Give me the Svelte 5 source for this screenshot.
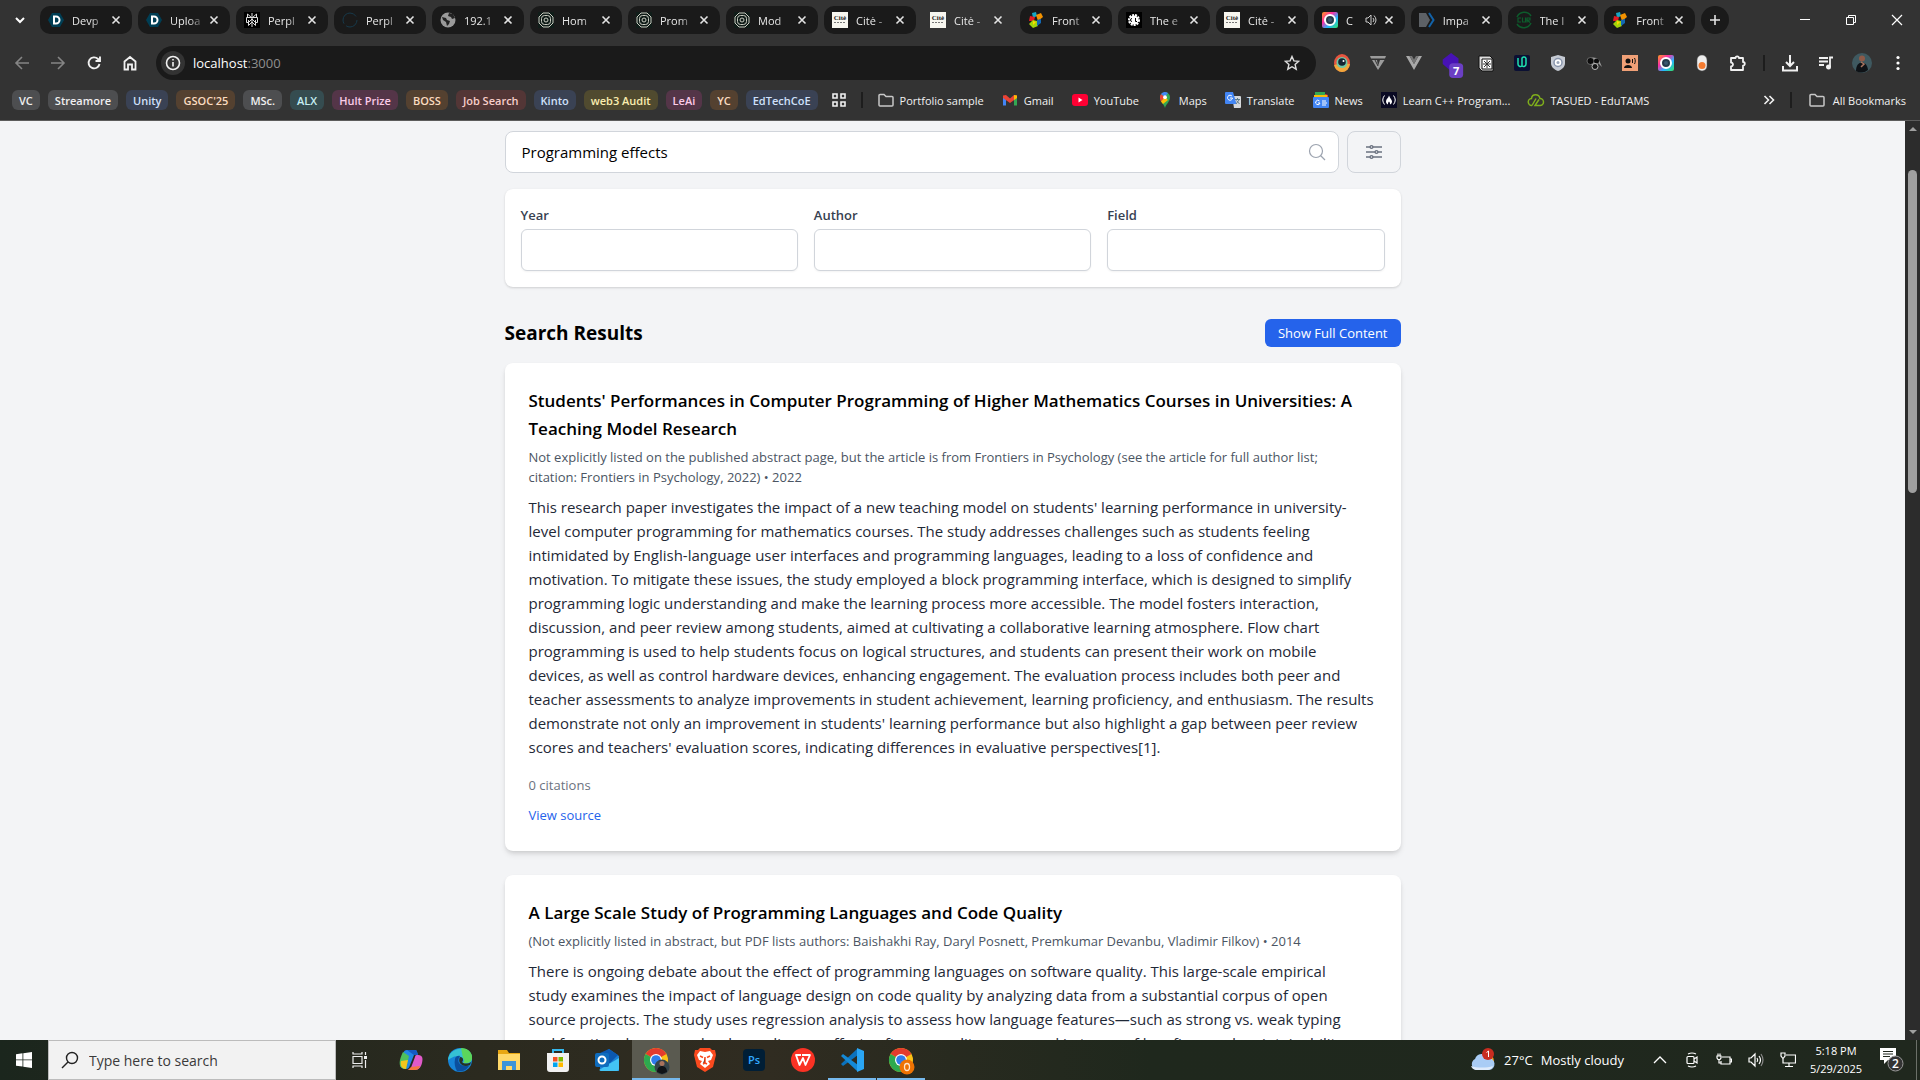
<script>
  let query = $state('Programming effects')
  let filters = $state({ year: '', author: '', field: '' })
  let showFilters = $state(true)
  let showFull = $state(false)

  const tabs = [
    { icon: 'devpost', title: 'Devp' },
    { icon: 'devpost', title: 'Uploa' },
    { icon: 'perplexity', title: 'Perpl' },
    { icon: 'loading', title: 'Perpl' },
    { icon: 'globe', title: '192.1' },
    { icon: 'rings', title: 'Hom' },
    { icon: 'rings', title: 'Prom' },
    { icon: 'rings', title: 'Mod' },
    { icon: 'cite', title: 'Citė -' },
    { icon: 'cite', title: 'Citė -', active: true },
    { icon: 'frontiers', title: 'Front' },
    { icon: 'gear', title: 'The e' },
    { icon: 'cite', title: 'Citė -' },
    { icon: 'camera', title: 'C', audio: true },
    { icon: 'impact', title: 'Impa' },
    { icon: 'cur', title: 'The I' },
    { icon: 'frontiers', title: 'Front' }
  ]

  const groups = [
    ['VC', 'grey'], ['Streamore', 'grey'], ['Unity', 'blue'], ["GSOC'25", 'orange'],
    ['MSc.', 'grey'], ['ALX', 'cyan'], ['Hult Prize', 'pink'], ['BOSS', 'orange'],
    ['Job Search', 'red'], ['Kinto', 'blue'], ['web3 Audit', 'yellow'], ['LeAi', 'pink'],
    ['YC', 'orange'], ['EdTechCoE', 'blue']
  ]

  const bookmarks = [
    ['folder', 'Portfolio sample'], ['gmail', 'Gmail'], ['youtube', 'YouTube'], ['maps', 'Maps'],
    ['translate', 'Translate'], ['news', 'News'], ['cpp', 'Learn C++ Program...'], ['cloud', 'TASUED - EduTAMS']
  ]

  const extensions = [
    'eye', 'vue2', 'vue', 'stack', 'notion', 'udacity', 'shield', 'mask', 'speaker', 'camera', 'pill', 'puzzle'
  ]

  const apps = [
    { icon: 'copilot' }, { icon: 'edge' }, { icon: 'explorer' }, { icon: 'store' }, { icon: 'outlook' },
    { icon: 'chrome', active: true, open: true }, { icon: 'brave' }, { icon: 'photoshop' }, { icon: 'wps' },
    { icon: 'vscode', open: true }, { icon: 'chrome2', open: true }
  ]

  const results = [
    {
      title: "Students' Performances in Computer Programming of Higher Mathematics Courses in Universities: A\nTeaching Model Research",
      meta: 'Not explicitly listed on the published abstract page, but the article is from Frontiers in Psychology (see the article for full author list;\ncitation: Frontiers in Psychology, 2022) • 2022',
      abstract: `This research paper investigates the impact of a new teaching model on students' learning performance in university-
level computer programming for mathematics courses. The study addresses challenges such as students feeling
intimidated by English-language user interfaces and programming languages, leading to a loss of confidence and
motivation. To mitigate these issues, the study employed a block programming interface, which is designed to simplify
programming logic understanding and make the learning process more accessible. The model fosters interaction,
discussion, and peer review among students, aimed at cultivating a collaborative learning atmosphere. Flow chart
programming is used to help students focus on logical structures, and students can present their work on mobile
devices, as well as control hardware devices, enhancing engagement. The evaluation process includes both peer and
teacher assessments to analyze improvements in student achievement, learning proficiency, and enthusiasm. The results
demonstrate not only an improvement in students' learning performance but also highlight a gap between peer review
scores and teachers' evaluation scores, indicating differences in evaluative perspectives[1].`,
      citations: 0
    },
    {
      title: 'A Large Scale Study of Programming Languages and Code Quality',
      meta: '(Not explicitly listed in abstract, but PDF lists authors: Baishakhi Ray, Daryl Posnett, Premkumar Devanbu, Vladimir Filkov) • 2014',
      abstract: `There is ongoing debate about the effect of programming languages on software quality. This large-scale empirical
study examines the impact of language design on code quality by analyzing data from a substantial corpus of open
source projects. The study uses regression analysis to assess how language features—such as strong vs. weak typing
and functional vs. procedural paradigms—affect software quality, measured in terms of bug fixes and maintainability.`,
      citations: 0
    }
  ]
</script>

{#snippet icon(name)}
  {#if name === 'devpost'}
    <svg viewBox="0 0 16 16"><path d="M4 1h8l4 7-4 7H4L0 8z" fill="#003e54" /><path d="M6 4.500h2a3.500 3.500 0 0 1 0 7H6z" fill="none" stroke="#fff" stroke-width="2" /></svg>
  {:else if name === 'perplexity'}
    <svg viewBox="0 0 16 16"><path fill="#000" d="M0 0h16v16H0z" /><path d="M8 1v14M3.500 2v3.500h9V2L8 6 3.500 2M2.500 5.500h11v5h-2L8 7l-3.500 3.500h-2zM4.500 8v5.500L8 10l3.500 3.500V8" fill="none" stroke="#ddd" /></svg>
  {:else if name === 'loading'}
    <svg viewBox="0 0 16 16"><circle cx="8" cy="8" r="7" fill="none" stroke="#17394a" stroke-dasharray="15 3 22 4" /></svg>
  {:else if name === 'globe'}
    <svg viewBox="0 0 16 16"><circle cx="8" cy="8" r="7.500" fill="#9a9a9a" /><path d="M2 5l4 1 1 2 3 1-1 3-2 2-1-4-3-2zM9 1l-1 3 3 1 1 2 3-1-2-4z" fill="#222" /></svg>
  {:else if name === 'rings'}
    <svg viewBox="0 0 16 16"><path fill="#101d19" d="M0 0h16v16H0z" /><g fill="none" stroke="#c9cbc0"><path d="M5 1h6l4 4v6l-4 4H5l-4-4V5z" /><rect x="3.500" y="3.500" width="9" height="9" rx="3" /><circle cx="8" cy="8" r="2" /></g></svg>
  {:else if name === 'cite'}
    <svg viewBox="0 0 16 16"><path fill="#f7f6ef" d="M0 0h16v16H0z" /><text x="8" y="8" text-anchor="middle" font-family="Liberation Serif, serif" font-size="7" font-weight="700" fill="#222">Citė</text><path d="M2 10.500h12" stroke="#777" stroke-dasharray="2 1" /></svg>
  {:else if name === 'frontiers'}
    <svg viewBox="0 0 16 16"><path d="M4 1l4-1 1 4-4 2z" fill="#16a6c4" /><path d="M2 4l5 1-1 4H1z" fill="#e31b23" /><path d="M8 3l5-2 2 4-5 4z" fill="#f39200" /><path d="M5 8l4 1 1 5-5 2-4-4z" fill="#a3d40b" /><path d="M9 8l4-1v4l-4 3z" fill="#1268b3" /><path d="M5 9l3 1-3 3z" fill="#ffd800" /></svg>
  {:else if name === 'gear'}
    <svg viewBox="0 0 16 16"><path fill="#000" d="M0 0h16v16H0z" /><circle cx="8" cy="8" r="4.500" fill="#fff" /><circle cx="8" cy="8" r="5" fill="none" stroke="#fff" stroke-width="2" stroke-dasharray="2 1" /><path d="M6 6.500a1.500 1.500 0 1 0 0 3M9.500 6v3.500h1.500" fill="none" stroke="#000" /></svg>
  {:else if name === 'camera'}
    <svg viewBox="0 0 16 16"><defs><linearGradient id="cam" x1="0" y1="0" x2="1" y2="1"><stop offset="0" stop-color="#ff9a1f" /><stop offset=".35" stop-color="#ff2ea6" /><stop offset=".65" stop-color="#22b8ff" /><stop offset="1" stop-color="#35e065" /></linearGradient></defs><rect width="16" height="16" rx="2" fill="url(#cam)" /><circle cx="8" cy="8" r="5" fill="#263b4c" stroke="#fff" stroke-width="2" /><circle cx="8" cy="8" r="2" fill="#3c5870" /></svg>
  {:else if name === 'impact'}
    <svg viewBox="0 0 16 16"><path d="M0 1h7l4 7-4 7H0z" fill="#5d6166" /><path d="M10 1l4.500 7L10 15" fill="none" stroke="#1262a8" stroke-width="2" /></svg>
  {:else if name === 'cur'}
    <svg viewBox="0 0 16 16"><path d="M1 5a8 8 0 0 1 14-1M15 11a8 8 0 0 1-14 1" fill="none" stroke="#0d5c2c" stroke-width="1.500" /><path d="M5 6H2v4h3M6.500 5.500V10h3V5.500M11 10.500V6h3v2h-3l3 2.500" fill="none" stroke="#0d5c2c" stroke-width="1.200" /></svg>
  {:else if name === 'eye'}
    <svg viewBox="0 0 16 16"><ellipse cx="8" cy="8" rx="8" ry="9" fill="#e6553f" /><path d="M8 17A8 9 0 0 1 0 10l8-2 8 1a8 9 0 0 1-8 8" fill="#f2a73b" /><circle cx="8" cy="7.500" r="5.500" fill="#6fc7a6" /><circle cx="8" cy="7" r="3.800" fill="#142433" /><circle cx="9.500" cy="6" r="1" fill="#fff" /></svg>
  {:else if name === 'vue2'}
    <svg viewBox="0 0 16 16"><path d="M0 1h16l-1 2.500H1zM2 5h5l1 6 2-6h4.500L8 15z" fill="#9b9b9b" /><path d="M5 5l3 6" stroke="#333" /></svg>
  {:else if name === 'vue'}
    <svg viewBox="0 0 16 16"><path d="M0 1h3.500L8 9l4.500-8H16L8 15z" fill="#a9a9a9" /><path d="M3.500 1H6l2 3.500L10 1h2.500L8 9z" fill="#777" /></svg>
  {:else if name === 'stack'}
    <svg viewBox="0 0 24 28"><path d="M2 8l9-7 8 6-9 8zM2 13l8 7 9-8V7l-9 8-8-7z" fill="#4712b5" /><rect x="9" y="12" width="15" height="16" rx="4" fill="#6b3fc4" /><text x="16.500" y="24.500" text-anchor="middle" font-family="Open Sans, sans-serif" font-size="12" font-weight="700" fill="#fff">7</text></svg>
  {:else if name === 'notion'}
    <svg viewBox="0 0 16 16"><path d="M1 1h11l3 3v12H4l-3-3z" fill="#ddd" stroke="#111" /><path d="M4 4h10v10H4z" fill="#fff" stroke="#111" /><path d="M6 6l6 6M12 6l-6 6M9 5v8M5 9h8" stroke="#333" /></svg>
  {:else if name === 'udacity'}
    <svg viewBox="0 0 16 16"><rect width="16" height="16" rx="2" fill="#0b1033" /><path d="M4 3v6a2.500 2.500 0 0 0 4 2V4.500a1.500 1.500 0 0 1 4-1V9a2.500 2.500 0 0 1-4 2" fill="none" stroke="#1fe0b0" stroke-width="1.500" /></svg>
  {:else if name === 'shield'}
    <svg viewBox="0 0 16 16"><path d="M8 0l7 2v6c0 4-3 6.500-7 8-4-1.500-7-4-7-8V2z" fill="#c5cad3" /><circle cx="8" cy="7.500" r="4" fill="#fff" stroke="#8793aa" stroke-width="1.500" /><circle cx="8" cy="7.500" r="1.500" fill="#9aa5b8" /></svg>
  {:else if name === 'mask'}
    <svg viewBox="0 0 16 16"><path d="M1 6c1-4 9-5 12-1l3 7-4-4-1 3H7z" fill="#9d9d9d" /><circle cx="4.500" cy="6" r="3.500" fill="#0c0c0c" stroke="#aaa" stroke-width=".5" /><circle cx="10.500" cy="6" r="2.500" fill="#0c0c0c" /><circle cx="9" cy="11.500" r="3" fill="#141414" stroke="#bbb" /></svg>
  {:else if name === 'speaker'}
    <svg viewBox="0 0 16 16"><path fill="#f0a077" d="M0 0h16v16H0z" /><circle cx="6" cy="6" r="2.500" fill="#111" /><path d="M2 13c0-4 8-4 8 0z" fill="#111" /><path d="M10.500 4v4M12.500 3c1 2 1 4 0 6" fill="none" stroke="#111" /></svg>
  {:else if name === 'pill'}
    <svg viewBox="0 0 16 16"><rect x="3" y="0" width="10" height="16" rx="5" fill="#eee" stroke="#555" stroke-width=".5" /><circle cx="8" cy="10.500" r="3.500" fill="#f47b30" /></svg>
  {:else if name === 'puzzle'}
    <svg viewBox="0 0 16 16" fill="none" stroke="#f1f1f1" stroke-width="1.800"><path d="M1 3h4.500a1.700 1.700 0 0 1 3.400 0H13v4a1.800 1.800 0 0 1 0 3.600V15H1v-3.500a2 2 0 0 0 0-4z" stroke-linejoin="round" /></svg>
  {:else if name === 'folder'}
    <svg viewBox="0 0 16 16" fill="none" stroke="#c7c7c7" stroke-width="1.500"><path d="M1 3.500A1 1 0 0 1 2 2.500h4l2 2h6a1 1 0 0 1 1 1V13a1 1 0 0 1-1 1H2a1 1 0 0 1-1-1z" /></svg>
  {:else if name === 'gmail'}
    <svg viewBox="0 0 16 16"><path d="M1 4v9.500h3V6z" fill="#4285f4" /><path d="M15 4v9.500h-3V6z" fill="#34a853" /><path d="M1 3.500L4 3l4 3.500L12 3l3 .5V6l-7 5-7-5z" fill="#ea4335" /><path d="M12 3l3 .5V6l-3 2z" fill="#fbbc04" /></svg>
  {:else if name === 'youtube'}
    <svg viewBox="0 0 16 16"><rect y="2" width="16" height="12" rx="3" fill="#ff0033" /><path d="M6.500 5.500v5l4-2.500z" fill="#fff" /></svg>
  {:else if name === 'maps'}
    <svg viewBox="0 0 16 16"><path d="M8 16c-1-4-5-6-5-10.500A5 5 0 0 1 13 5c0 5-4 7-5 11z" fill="#34a853" /><path d="M3 6a5 5 0 0 1 1-4l4 3-4 5z" fill="#ea4335" /><path d="M4 2a5 5 0 0 1 7-1L8 5z" fill="#4285f4" /><path d="M4 9.500L8 5l3 3-5 4z" fill="#fbbc04" /><circle cx="8" cy="5.200" r="1.900" fill="#fff" /></svg>
  {:else if name === 'translate'}
    <svg viewBox="0 0 16 16"><path d="M7 4h8a1 1 0 0 1 1 1v10a1 1 0 0 1-1 1H9z" fill="#d5d8dc" /><path d="M1 0h7l3.500 12H1a1 1 0 0 1-1-1V1a1 1 0 0 1 1-1z" fill="#4285f4" /><path d="M7 4.200A2.500 2.500 0 1 0 7.500 6H5" fill="none" stroke="#fff" /><path d="M10 7.500h5M12.500 6v1.500M14 8l-3 4M11.500 8.500l3 3.500" stroke="#607d8b" fill="none" /></svg>
  {:else if name === 'news'}
    <svg viewBox="0 0 16 16"><path d="M2 0h10v4H2z" fill="#34a853" /><path d="M12 2l3 1v4h-3z" fill="#ea4335" /><path d="M1 3h13v4H1z" fill="#fbbc04" /><rect y="5" width="16" height="11" rx="1" fill="#4285f4" /><path d="M6.500 9A2.200 2.200 0 1 0 7 11H5M9 9h4M9 11h5M9 13h4" fill="none" stroke="#fff" /></svg>
  {:else if name === 'cpp'}
    <svg viewBox="0 0 16 16"><path fill="#0a0a23" d="M0 0h16v16H0z" /><path d="M3.500 3.500Q0 8 3.500 12.500M12.500 3.500q3.500 4.500 0 9" fill="none" stroke="#fff" /><path d="M8 3.500c-.5 2.500-3 3.500-3 6 0 1.500 1 2.500 2 3 0-1.500 0-2 1-3 1 1 1 1.500 1 3 1-.5 2-1.500 2-3 0-2-2-3-3-6z" fill="#fff" /></svg>
  {:else if name === 'cloud'}
    <svg viewBox="0 0 16 16"><path d="M4 13.500a3.500 3.500 0 0 1-.5-7C4 1.500 11 1.500 12 6.500a3.500 3.500 0 0 1 0 7H7l4-6M4 13.500l4-7" fill="none" stroke="#7fae1c" stroke-width="1.500" /></svg>
  {:else if name === 'copilot'}
    <svg viewBox="0 0 24 24"><path d="M8 2h8c2 0 2 2 3 5h-4l-4 10c-1 3-2 4-4 4-6 0-7-4-5-9S4 2 8 2z" fill="#2286e6" /><path d="M1 12c1-4 2-6 3-8l6 4-3 13c-6 0-7-4-6-9z" fill="#4fc05c" /><path d="M2 13l7-1-2 9c-4 0-6-3-5-8z" fill="#f3c51d" /><path d="M16 22H8c3 0 4-2 5-5l3-8c.5-2 1-2 3-2 5 0 5 4 4 8s-3 7-7 7z" fill="#e05ac9" /><path d="M12 19l9-1c-1 3-3 4-5 4H9z" fill="#f5773f" /><path d="M8 2h8c2 0 2 2 3 5h-4z" fill="#155ac2" /></svg>
  {:else if name === 'edge'}
    <svg viewBox="0 0 24 24"><circle cx="12" cy="12" r="12" fill="#1684d8" /><path d="M0 12C1-2 24-4 24 10c0 5-5 6-9 5 2-3-1-7-5-7-5 0-8 3-10 4z" fill="#35c1d4" /><path d="M13 0c7 0 12 5 11 11-1 4-6 5-9 4 2-2 1-4 0-5z" fill="#5bd65b" /><path d="M7 11c0-2 3-4 5-3-4 5-1 11 9 10-3 5-8 6-12 5-2-3-3-8-2-12z" fill="#0b4f9e" /><path d="M12 9c3 0 4 3 2 5 2 2 6 2 9 0l-1 3c-7 3-13-2-10-8z" fill="#263225" /></svg>
  {:else if name === 'explorer'}
    <svg viewBox="0 0 24 24"><path d="M1 2h9l2 3h11v17H1z" fill="#e8a713" /><path d="M1 6h22v16H1z" fill="#ffd869" /><path d="M5 22v-9h14v9h-4v-4H9v4z" fill="#3c94d9" /></svg>
  {:else if name === 'store'}
    <svg viewBox="0 0 24 24"><path d="M7 7V2h10v5" fill="none" stroke="#35b8ee" stroke-width="2" /><path d="M1 5h22v16a3 3 0 0 1-3 3H4a3 3 0 0 1-3-3z" fill="#f1f1f1" /><path d="M7 9h4.500v4.500H7z" fill="#f25022" /><path d="M12.500 9H17v4.500h-4.500z" fill="#7fba00" /><path d="M7 14.500h4.500V19H7z" fill="#00a4ef" /><path d="M12.500 14.500H17V19h-4.500z" fill="#ffb900" /></svg>
  {:else if name === 'outlook'}
    <svg viewBox="0 0 24 24"><path d="M5 7l9-6 10 7v15H5z" fill="#1a7fd4" /><path d="M5 5l9-4 9 6-8 8H5z" fill="#0b58b0" /><path d="M4 22l20-12v11a2 2 0 0 1-2 2H6z" fill="#43c4f5" /><rect y="5" width="14" height="14" rx="2" fill="#0f6cbd" /><circle cx="7" cy="12" r="3.500" fill="none" stroke="#fff" stroke-width="2" /></svg>
  {:else if name === 'chrome' || name === 'chrome2'}
    <svg viewBox="0 0 24 24" overflow="visible"><circle cx="12" cy="12" r="12" fill="#fbc116" /><path d="M12 12L1.600 6A12 12 0 0 1 22.400 6z" fill="#e33b2e" /><path d="M1.600 6A12 12 0 0 0 12 24l5-9-5-3z" fill="#2da94f" /><circle cx="12" cy="12" r="6" fill="#fff" /><circle cx="12" cy="12" r="4.800" fill="#2f7ceb" />
      {#if name === 'chrome'}
        <circle cx="18" cy="19" r="7.500" fill="#35444a" /><circle cx="18" cy="15.500" r="2.500" fill="#a9725c" /><path d="M13 24c0-8 10-8 10 0l-5 2z" fill="#101418" />
      {:else}
        <circle cx="18" cy="19" r="7.500" fill="#ee7203" /><ellipse cx="18" cy="19" rx="2.500" ry="3.500" fill="none" stroke="#ffe4cc" stroke-width="1.300" />
      {/if}
    </svg>
  {:else if name === 'brave'}
    <svg viewBox="0 0 24 24"><path d="M7 0h10l2 2h3l1 5-3 12-8 5-8-5L1 7l1-5h3z" fill="#fb4a1e" /><path d="M12 4l5-1 3 4-2 5-3 1 2 3-5 4-5-4 2-3-3-1-2-5 3-4z" fill="#fff" /><path d="M7 8l3 1.500M17 8l-3 1.500M12 9v6l-2 1M12 15l2 1" stroke="#fb4a1e" stroke-width="1.500" /></svg>
  {:else if name === 'photoshop'}
    <svg viewBox="0 0 24 24"><rect x="1" y="1" width="22" height="22" rx="4" fill="#001e36" /><text x="12" y="16" text-anchor="middle" font-family="Open Sans, sans-serif" font-size="11" font-weight="600" fill="#31a8ff">Ps</text></svg>
  {:else if name === 'wps'}
    <svg viewBox="0 0 24 24"><circle cx="12" cy="12" r="12" fill="#fa3224" /><path d="M10 7H5l3.500 10L12 10l2.500 7L19 7h-8" fill="none" stroke="#fff" stroke-width="1.800" stroke-linejoin="round" /></svg>
  {:else if name === 'vscode'}
    <svg viewBox="0 0 24 24"><path d="M17 1L1 16l2 2L18 7z" fill="#0b72bd" /><path d="M17 23L1 8l2-2 15 11z" fill="#1489d6" /><path d="M17 0l7 3v18l-7 3z" fill="#2aa5f3" /></svg>
  {/if}
{/snippet}

<div class="desktop">
  <header class="browser">
    <div class="strip">
      <button class="plain menu" aria-label="Search tabs"><svg viewBox="0 0 16 16" width="16" height="16"><path d="M4 6l4 4 4-4" fill="none" stroke="#fff" stroke-width="2" /></svg></button>
      <div class="tabs">
        {#each tabs as tab}
          <div class="tab" class:active={tab.active}>
            <span class="ico">{@render icon(tab.icon)}</span>
            <span class="tab-title">{tab.title}</span>
            {#if tab.audio}
              <svg class="audio" viewBox="0 0 12 12"><path d="M1 4h2l3-3v10L3 8H1z" fill="none" stroke="#ccc" /><path d="M8 4q2 2 0 4M9 1.500q4 4.500 0 9" fill="none" stroke="#ccc" /></svg>
            {/if}
            <button class="plain close" aria-label="Close tab"><svg viewBox="0 0 16 16" width="16" height="16"><path d="M4.500 4.500l7 7M11.500 4.500l-7 7" stroke="#e3e3e3" stroke-width="1.600" /></svg></button>
          </div>
        {/each}
      </div>
      <button class="plain new-tab" aria-label="New tab"><svg viewBox="0 0 16 16" width="16" height="16"><path d="M8 3v10M3 8h10" stroke="#e3e3e3" stroke-width="1.600" /></svg></button>
      <div class="window">
        <button class="plain" aria-label="Minimise"><svg viewBox="0 0 12 12" width="12" height="12"><path d="M1 5.500h10" stroke="#fff" /></svg></button>
        <button class="plain" aria-label="Restore"><svg viewBox="0 0 12 12" width="12" height="12" fill="none" stroke="#fff"><path d="M1.500 3.500h7v7h-7zM3.500 3V1.500h7v7H9" /></svg></button>
        <button class="plain" aria-label="Close"><svg viewBox="0 0 12 12" width="12" height="12"><path d="M1 1l10 10M11 1L1 11" stroke="#fff" stroke-width="1.200" /></svg></button>
      </div>
    </div>

    <div class="toolbar">
      <button class="plain tool" aria-label="Back"><svg viewBox="0 0 16 16" width="16" height="16" fill="none" stroke="#858585" stroke-width="1.600"><path d="M8 2L2 8l6 6M2 8h13" /></svg></button>
      <button class="plain tool" aria-label="Forward"><svg viewBox="0 0 16 16" width="16" height="16" fill="none" stroke="#858585" stroke-width="1.600"><path d="M8 2l6 6-6 6M14 8H1" /></svg></button>
      <button class="plain tool" aria-label="Reload"><svg viewBox="0 0 16 16" width="16" height="16" fill="none" stroke="#f1f1f1" stroke-width="1.900"><path d="M13.500 9A5.500 5.500 0 1 1 12 4l2 2M14 1.500V6H9.500" /></svg></button>
      <button class="plain tool" aria-label="Home"><svg viewBox="0 0 16 16" width="16" height="16" fill="none" stroke="#f1f1f1" stroke-width="1.800"><path d="M2.500 14.500V6.500L8 2l5.500 4.500v8H10V9.500H6v5z" /></svg></button>
      <div class="omnibox">
        <button class="plain info" aria-label="Site information"><svg viewBox="0 0 16 16" width="16" height="16" fill="none" stroke="#f1f1f1" stroke-width="1.600"><circle cx="8" cy="8" r="6.500" /><path d="M8 7v4.500M8 4v1.500" /></svg></button>
        <div class="url">localhost<span>:3000</span></div>
        <button class="plain star" aria-label="Bookmark this page"><svg viewBox="0 0 16 16" width="16" height="16" fill="none" stroke="#ddd" stroke-width="1.400"><path d="M8 1.500l1.900 4.400 4.800.4-3.600 3.200 1.100 4.700L8 11.700l-4.200 2.500 1.100-4.700L1.300 6.300l4.800-.4z" /></svg></button>
      </div>
      <div class="extensions">
        {#each extensions as name}
          <button class="plain tool" aria-label={name}><span class="ico" class:large={name === 'stack'}>{@render icon(name)}</span></button>
        {/each}
      </div>
      <span class="sep"></span>
      <button class="plain tool" aria-label="Downloads"><svg viewBox="0 0 18 18" width="18" height="18" fill="none" stroke="#f1f1f1" stroke-width="2"><path d="M9 1v11M5 8l4 4 4-4M2 12v4.500h14V12" /></svg></button>
      <button class="plain tool" aria-label="Media"><svg viewBox="0 0 16 16" width="16" height="16" fill="none" stroke="#f1f1f1" stroke-width="1.800"><path d="M1 3h9M1 6.500h9M1 10h5M12 12V2.500h3" /><circle cx="10.500" cy="12" r="1.600" fill="#f1f1f1" /></svg></button>
      <button class="plain tool" aria-label="Profile"><svg viewBox="0 0 20 20" width="20" height="20"><circle cx="10" cy="10" r="10" fill="#3f5960" /><circle cx="10" cy="5.500" r="3" fill="#8e5a48" /><path d="M4 18c0-11 11-11 12-1a10 10 0 0 1-12 1z" fill="#0e1216" /><path d="M9 9l3 2-3 3" fill="none" stroke="#a87560" stroke-width="1.500" /></svg></button>
      <button class="plain tool" aria-label="Menu"><svg viewBox="0 0 16 16" width="16" height="16" fill="#fff"><circle cx="8" cy="2.500" r="1.600" /><circle cx="8" cy="8" r="1.600" /><circle cx="8" cy="13.500" r="1.600" /></svg></button>
    </div>

    <nav class="bookmarks">
      {#each groups as [label, color]}
        <button class="group {color}">{label}</button>
      {/each}
      <button class="plain grid" aria-label="Apps"><svg viewBox="0 0 14 14" width="14" height="14" fill="none" stroke="#f1f1f1" stroke-width="1.600"><path d="M1 1h4v4H1zM9 1h4v4H9zM1 9h4v4H1zM9 9h4v4H9z" /></svg></button>
      <span class="sep"></span>
      <div class="links">
        {#each bookmarks as [name, label]}
          <a href="#{name}"><span class="ico">{@render icon(name)}</span>{label}</a>
        {/each}
      </div>
      <button class="plain more" aria-label="More bookmarks"><svg viewBox="0 0 12 12" width="12" height="12" fill="none" stroke="#f1f1f1" stroke-width="1.600"><path d="M1.500 2l4 4-4 4M6.500 2l4 4-4 4" /></svg></button>
      <span class="sep"></span>
      <a class="all" href="#all"><span class="ico">{@render icon('folder')}</span>All Bookmarks</a>
    </nav>
  </header>

  <div class="viewport">
    <main>
      <div class="column">
        <div class="search">
          <div class="search-box">
            <input type="text" aria-label="Search papers" bind:value={query} />
            <svg viewBox="0 0 18 18" width="18" height="18" fill="none" stroke="#9ca3af" stroke-width="1.200"><circle cx="8" cy="8" r="6.500" /><path d="M12.500 12.500l4.500 4.500" /></svg>
          </div>
          <button class="toggle" aria-label="Filters" onclick={() => (showFilters = !showFilters)}>
            <svg viewBox="0 0 16 16" width="16" height="16" fill="none" stroke="#6b7280" stroke-width="1.400"><path d="M0 3h4M7 3h9M0 8h9M12 8h4M0 13h4M7 13h9" /><circle cx="5.500" cy="3" r="1.400" /><circle cx="10.500" cy="8" r="1.400" /><circle cx="5.500" cy="13" r="1.400" /></svg>
          </button>
        </div>

        {#if showFilters}
          <div class="filters">
            <div class="field">
              <label for="year">Year</label>
              <input id="year" type="text" bind:value={filters.year} />
            </div>
            <div class="field">
              <label for="author">Author</label>
              <input id="author" type="text" bind:value={filters.author} />
            </div>
            <div class="field">
              <label for="field">Field</label>
              <input id="field" type="text" bind:value={filters.field} />
            </div>
          </div>
        {/if}

        <div class="results-head">
          <h2>Search Results</h2>
          <button class="primary" onclick={() => (showFull = !showFull)}>{showFull ? 'Show Abstracts' : 'Show Full Content'}</button>
        </div>

        <div class="results">
          {#each results as result}
            <article>
              <h3>{result.title}</h3>
              <p class="meta">{result.meta}</p>
              <p class="abstract">{result.abstract}</p>
              <p class="citations">{result.citations} citations</p>
              <a class="source" href="#source">View source</a>
            </article>
          {/each}
        </div>
      </div>
    </main>
    <div class="scrollbar">
      <svg viewBox="0 0 8 6" width="8" height="6"><path d="M0 5l4-4 4 4z" fill="#9f9f9f" /></svg>
      <div class="track"><div class="thumb"></div></div>
      <svg viewBox="0 0 8 6" width="8" height="6"><path d="M0 1l4 4 4-4z" fill="#9f9f9f" /></svg>
    </div>
  </div>

  <footer class="taskbar">
    <button class="plain start" aria-label="Start"><svg viewBox="0 0 16 16" width="16" height="16" fill="#fff"><path d="M0 2.200L6.500 1.300v6.200H0zM7.300 1.200L16 0v7.500H7.300zM0 8.300h6.500v6.300L0 13.700zM7.300 8.300H16V16l-8.700-1.200z" /></svg></button>
    <label class="task-search">
      <svg viewBox="0 0 18 18" width="18" height="18" fill="none" stroke="#222" stroke-width="1.400"><circle cx="11" cy="7" r="5.500" /><path d="M7 11l-6 6" /></svg>
      <input type="text" placeholder="Type here to search" aria-label="Type here to search" />
    </label>
    <div class="apps">
      <button class="plain app view" aria-label="Task view"><svg viewBox="0 0 16 16" width="16" height="16" fill="none" stroke="#eee" stroke-width="1.200"><path d="M1 4.500h9v7H1zM1 0v2h9V0M1 16v-2h9v2M13.500 0v3M13.500 8v8" /><path d="M12 4h3v3h-3z" fill="#eee" stroke="none" /></svg></button>
      {#each apps as app}
        <button class="plain app" class:active={app.active} class:open={app.open} aria-label={app.icon}><span class="app-icon">{@render icon(app.icon)}</span></button>
      {/each}
    </div>
    <div class="tray">
      <button class="plain weather">
        <svg viewBox="0 0 26 24" width="26" height="24"><circle cx="17" cy="13" r="7" fill="#f4a01c" /><path d="M6 22a6 6 0 0 1-1-11 7 7 0 0 1 13-1 6 6 0 0 1 1 12z" fill="#a9ccf5" /><path d="M1 18c6 2 16 2 22 0a6 6 0 0 1-5 4H6a6 6 0 0 1-5-4z" fill="#dfebfb" /><circle cx="18" cy="6" r="6" fill="#c92d20" /><path d="M16.500 4.500L18.500 3v6" fill="none" stroke="#fff" /></svg>
        <span>27°C</span><span>Mostly cloudy</span>
      </button>
      <button class="plain tray-icon" aria-label="Hidden icons"><svg viewBox="0 0 16 16" width="16" height="16" fill="none" stroke="#fff" stroke-width="1.300"><path d="M2 11l6-6 6 6" /></svg></button>
      <button class="plain tray-icon" aria-label="Camera"><svg viewBox="0 0 16 16" width="16" height="16" fill="none" stroke="#fff" stroke-width="1.200"><rect x="3" y="4.500" width="7" height="7" rx="1" /><path d="M10 7l3-2v6l-3-2M4 2q4-2 8 0M4 14q4 2 8 0" /></svg></button>
      <button class="plain tray-icon" aria-label="Battery"><svg viewBox="0 0 16 16" width="16" height="16" fill="none" stroke="#fff" stroke-width="1.200"><path d="M6 5h8v7H5V9M14 7h1.500v3H14M1 4h4v2L4 7.500H2L1 6zM2 4V1.500M4 4V1.500M3 7.500V11h2" /></svg></button>
      <button class="plain tray-icon" aria-label="Volume"><svg viewBox="0 0 16 16" width="16" height="16" fill="none" stroke="#fff" stroke-width="1.200"><path d="M1 6h2l4-4v12L3 10H1zM9 6q1.500 2 0 4M11 4q3 4 0 8" /><path d="M13 2q4 6 0 12" stroke="#888" /></svg></button>
      <button class="plain tray-icon" aria-label="Network"><svg viewBox="0 0 16 16" width="16" height="16" fill="none" stroke="#fff" stroke-width="1.200"><path d="M6 3h9.500v8H3V8M1 1h4v3L3.500 6h-1L1 4zM3 6v3M5 14.500h8M9 11v3.500" /></svg></button>
      <div class="clock"><span>5:18 PM</span><span>5/29/2025</span></div>
      <button class="plain notify" aria-label="Notifications"><svg viewBox="0 0 24 24" width="24" height="24"><path d="M0 0h16v12H8l-4 4v-4H0z" fill="#fff" /><path d="M3 3.500h10M3 6h10M3 8.500h7" stroke="#20281e" /><circle cx="15.500" cy="15.500" r="7.500" fill="#333" stroke="#999" /><text x="15.500" y="20" text-anchor="middle" font-family="Open Sans, sans-serif" font-size="12" font-weight="600" fill="#fff">2</text></svg></button>
      <span class="peek"></span>
    </div>
  </footer>
</div>

<style>
  :global(body) { margin: 0; }
  .desktop {
    height: 100vh; display: grid; grid-template-rows: auto minmax(0, 1fr) auto;
    grid-template-columns: minmax(0, 1fr);
    font-family: 'Segoe UI', 'Open Sans', 'Noto Sans', sans-serif; overflow: hidden;
  }
  .desktop * { box-sizing: border-box; }
  button, input { font-family: inherit; }
  svg { display: block; flex-shrink: 0; }
  .plain {
    background: none; border: none; padding: 0; color: inherit; cursor: pointer;
    display: flex; align-items: center; justify-content: center; flex-shrink: 0;
  }
  .ico { width: 16px; height: 16px; flex-shrink: 0; }
  .ico :global(svg) { width: 100%; height: 100%; overflow: visible; }
  .ico.large { width: 24px; height: 26px; margin-top: 4px; margin-left: 4px; }

  .browser { background: #333; color: #e8e8e8; border-bottom: 1px solid #5c5c5c; font-size: 12px; }
  .strip { display: flex; align-items: center; height: 40px; }
  .menu { width: 40px; height: 28px; }
  .tabs { display: flex; flex: 1; gap: 6px; min-width: 0; }
  .tab {
    flex: 0 1 92px; min-width: 60px; height: 28px; border-radius: 10px; background: #1a1a1a;
    display: flex; align-items: center; gap: 4px; padding: 0 8px;
  }
  .tab:nth-child(-n + 13) { flex-shrink: 0; }
  .tab.active { background: none; }
  .tab-title {
    flex: 1; min-width: 0; margin-left: 4px; overflow: hidden; white-space: nowrap; font-size: 11px;
    mask-image: linear-gradient(90deg, #000 60%, rgba(0,0,0,0.2));
  }
  .audio { width: 12px; height: 12px; }
  .close { width: 16px; }
  .new-tab { width: 28px; height: 28px; margin-left: 6px; border-radius: 50%; background: #1a1a1a; }
  .window { display: flex; margin-left: 53px; }
  .window button { width: 46px; height: 40px; }

  .toolbar { display: flex; align-items: center; height: 46px; padding: 0 4px; }
  .tool { width: 36px; height: 34px; }
  .omnibox {
    flex: 1; height: 34px; display: flex; align-items: center; margin: 0 8px;
    padding: 0 16px 0 5px; border-radius: 17px; background: #1a1a1a;
  }
  .info { width: 24px; height: 24px; border-radius: 50%; background: #333; }
  .url { flex: 1; margin-left: 8px; font-size: 13px; color: #fff; }
  .url span { color: #8f8f8f; }
  .extensions { display: flex; }
  .sep { width: 2px; height: 16px; background: #1d1d1d; margin: 0 7px; flex-shrink: 0; }

  .bookmarks { display: flex; align-items: center; height: 34px; padding: 0 14px 6px 12px; gap: 8px; }
  .group {
    height: 20px; padding: 0 7px; border: none; border-radius: 6px; cursor: pointer;
    font-size: 11px; font-weight: 600; white-space: nowrap;
  }
  .grey { background: #4d4e50; color: #f0f0f0; }
  .blue { background: #3a4254; color: #cfe0fb; }
  .orange { background: #544130; color: #fbdcc0; }
  .cyan { background: #354c50; color: #c4eef2; }
  .pink { background: #543548; color: #fbcbe8; }
  .red { background: #533636; color: #f8cfcb; }
  .yellow { background: #504a2f; color: #faeeb0; }
  .grid { width: 14px; margin-left: 6px; }
  .bookmarks a {
    display: flex; align-items: center; gap: 6px; color: #f1f1f1;
    font-size: 11px; text-decoration: none; white-space: nowrap;
  }
  .bookmarks .all { gap: 8px; margin-left: 2px; }
  .links { display: flex; flex: 1; gap: 18px; }

  .viewport { display: flex; min-height: 0; background: #f3f4f6; }
  main { flex: 1; min-width: 0; overflow: hidden; }
  .column { max-width: 896px; margin: 0 auto; padding: 10px 0; }
  .search { display: flex; gap: 8px; }
  .search-box {
    flex: 1; display: flex; align-items: center; height: 42px; padding: 0 12px 0 16px;
    background: #fff; border: 1px solid #d1d5db; border-radius: 8px;
  }
  .search-box input { flex: 1; border: none; outline: none; padding: 0; background: none; font-size: 15px; color: #000; }
  .toggle {
    width: 54px; height: 42px; display: flex; align-items: center; justify-content: center;
    background: none; border: 1px solid #d1d5db; border-radius: 8px; cursor: pointer;
  }
  .filters {
    display: grid; grid-template-columns: repeat(3, minmax(0, 1fr)); gap: 16px; margin-top: 16px; padding: 16px;
    background: #fff; border-radius: 8px; box-shadow: 0 1px 3px rgba(0,0,0,0.1), 0 1px 2px rgba(0,0,0,0.06);
  }
  .field { display: flex; flex-direction: column; gap: 4px; }
  label { font-size: 13px; line-height: 20px; font-weight: 600; color: #374151; }
  .field input {
    width: 100%; height: 42px; padding: 8px 12px; font-size: 15px; background: #fff;
    border: 1px solid #d1d5db; border-radius: 6px; box-shadow: 0 1px 2px rgba(0,0,0,0.05);
  }
  .results-head { display: flex; align-items: center; justify-content: space-between; margin: 32px 0 16px; }
  h2 { margin: 0; font-size: 19px; line-height: 28px; font-weight: 700; color: #000; }
  .primary {
    padding: 4px 13px; border: none; border-radius: 6px; background: #2563eb; color: #fff;
    font-size: 13px; line-height: 20px; cursor: pointer;
  }
  .results { display: flex; flex-direction: column; gap: 24px; }
  article {
    padding: 24px; background: #fff; border-radius: 8px;
    box-shadow: 0 4px 6px -1px rgba(0,0,0,0.1), 0 2px 4px -1px rgba(0,0,0,0.1);
  }
  h3 { margin: 0; font-size: 17px; line-height: 28px; font-weight: 600; color: #000; white-space: pre-line; }
  p { margin: 0; white-space: pre-line; }
  .meta { margin-top: 4px; font-size: 13px; line-height: 20px; color: #4b5563; }
  .abstract { margin-top: 8px; font-size: 15px; line-height: 24px; color: #1f2937; }
  .citations { margin: 16px 0 8px; font-size: 13px; line-height: 20px; color: #6b7280; }
  .source { display: block; font-size: 13px; line-height: 24px; color: #2563eb; text-decoration: none; }

  .scrollbar {
    width: 15px; display: flex; flex-direction: column; align-items: center; gap: 8px;
    padding: 5px 0; background: #2c2c2c;
  }
  .track { flex: 1; width: 9px; padding-top: 30px; }
  .thumb { height: 38%; border-radius: 5px; background: #9f9f9f; }

  .taskbar {
    height: 40px; display: flex; color: #fff;
    background: linear-gradient(90deg, #1b261d 0%, #2b2a1f 25%, #302c21 40%, #1f281d 60%, #20281e 100%);
  }
  .start { width: 48px; }
  .task-search {
    width: 288px; display: flex; align-items: center; gap: 10px; padding: 0 12px;
    background: #f2f2f2; border: 1px solid #bcbcbc;
  }
  .task-search input { flex: 1; min-width: 0; border: none; outline: none; padding: 0; background: none; font-size: 14px; }
  .task-search input::placeholder { color: #3a3a3a; opacity: 1; }
  .apps { display: flex; gap: 1px; flex: 1; }
  .app { width: 48px; }
  .app.view { margin-right: 2px; }
  .app.open { border-bottom: 2px solid #76b9ed; padding-top: 2px; }
  .app.active { background: #5a5a50; }
  .app-icon { width: 24px; height: 24px; }
  .app-icon :global(svg) { width: 100%; height: 100%; }
  .tray { display: flex; align-items: stretch; }
  .weather { gap: 8px; font-size: 13px; margin-right: 20px; }
  .tray-icon { width: 32px; }
  .clock {
    width: 64px; display: flex; flex-direction: column; align-items: center; justify-content: center;
    font-size: 11px; line-height: 18px;
  }
  .notify { width: 48px; }
  .peek { width: 1px; background: #6b7068; margin: 0 3px 0 0; }
</style>
